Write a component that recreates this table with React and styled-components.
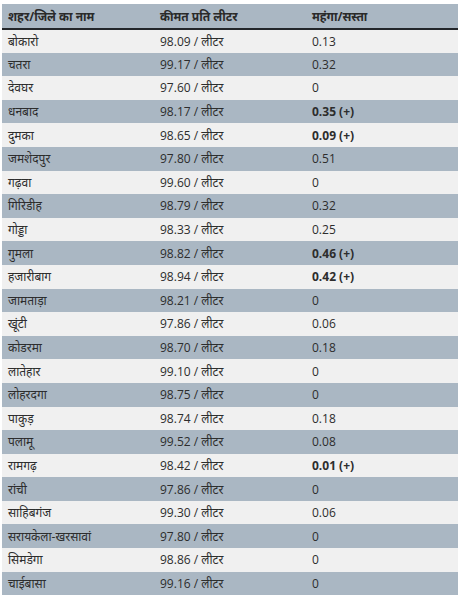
import React from 'react';
import styled, { createGlobalStyle } from 'styled-components';

const GlobalStyle = createGlobalStyle`
  body {
    margin: 0;
    background: #ffffff;
    font-family: "Open Sans", "Noto Sans", sans-serif;
  }
`;

const Wrapper = styled.div`
  padding: 4px 5px 0 2px;
`;

const Table = styled.table`
  width: 456px;
  border-collapse: collapse;
  table-layout: fixed;
  font-size: 12px;
  color: #2d2d2d;
`;

const HeadCell = styled.th`
  background: #aab7c3;
  text-align: left;
  font-weight: 700;
  height: 24px;
  padding: 0 6px;
  border-bottom: 2px solid #23262a;
  color: #2a2a2a;
`;

const Row = styled.tr`
  background: ${props => (props.striped ? '#aab7c3' : '#f0f0f0')};
`;

const Cell = styled.td`
  height: 23.6px;
  padding: 0 6px;
  box-sizing: border-box;
  font-weight: ${props => (props.bold ? 700 : 400)};
`;

const rows = [
  ['बोकारो', '98.09', '0.13'],
  ['चतरा', '99.17', '0.32'],
  ['देवघर', '97.60', '0'],
  ['धनबाद', '98.17', '0.35 (+)', true],
  ['दुमका', '98.65', '0.09 (+)', true],
  ['जमशेदपुर', '97.80', '0.51'],
  ['गढ़वा', '99.60', '0'],
  ['गिरिडीह', '98.79', '0.32'],
  ['गोड्डा', '98.33', '0.25'],
  ['गुमला', '98.82', '0.46 (+)', true],
  ['हजारीबाग', '98.94', '0.42 (+)', true],
  ['जामताड़ा', '98.21', '0'],
  ['खूंटी', '97.86', '0.06'],
  ['कोडरमा', '98.70', '0.18'],
  ['लातेहार', '99.10', '0'],
  ['लोहरदगा', '98.75', '0'],
  ['पाकुड़', '98.74', '0.18'],
  ['पलामू', '99.52', '0.08'],
  ['रामगढ़', '98.42', '0.01 (+)', true],
  ['रांची', '97.86', '0'],
  ['साहिबगंज', '99.30', '0.06'],
  ['सरायकेला-खरसावां', '97.80', '0'],
  ['सिमडेगा', '98.86', '0'],
  ['चाईबासा', '99.16', '0'],
];

export default function App() {
  return (
    <Wrapper>
      <GlobalStyle />
      <Table>
        <thead>
          <tr>
            <HeadCell>शहर/जिले का नाम</HeadCell>
            <HeadCell>कीमत प्रति लीटर</HeadCell>
            <HeadCell>महंगा/सस्ता</HeadCell>
          </tr>
        </thead>
        <tbody>
          {rows.map(([city, price, diff, up], i) => (
            <Row key={city} striped={i % 2 === 1}>
              <Cell>{city}</Cell>
              <Cell>{price} / लीटर</Cell>
              <Cell bold={up}>{diff}</Cell>
            </Row>
          ))}
        </tbody>
      </Table>
    </Wrapper>
  );
}
